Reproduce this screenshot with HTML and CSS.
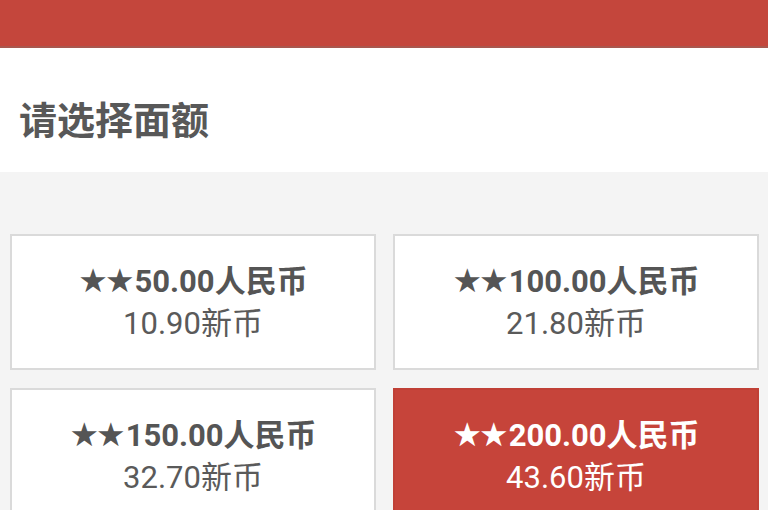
FILE: index.html
```html
<!DOCTYPE html>
<html lang="zh">
<head>
<meta charset="utf-8">
<link rel="stylesheet" href="styles.css">
</head>
<body>
<div class="topbar"></div>
<div class="title-row"><h1 class="title">请选择面额</h1></div>
<div class="options">
  <div class="card"><div class="main"><span class="stars">★★</span>50.00人民币</div><div class="sub">10.90新币</div></div>
  <div class="card"><div class="main"><span class="stars">★★</span>100.00人民币</div><div class="sub">21.80新币</div></div>
  <div class="card"><div class="main"><span class="stars">★★</span>150.00人民币</div><div class="sub">32.70新币</div></div>
  <div class="card selected"><div class="main"><span class="stars">★★</span>200.00人民币</div><div class="sub">43.60新币</div></div>
</div>
</body>
</html>
```
FILE: styles.css
```css
html, body {
  margin: 0;
  padding: 0;
  background: #f4f4f4;
  font-family: Roboto, "Noto Sans CJK SC", sans-serif;
  color: #555;
  overflow: hidden;
}
.topbar {
  height: 46px;
  background: #c4463c;
  border-bottom: 2px solid #a9574e;
}
.title-row {
  height: 124px;
  background: #fff;
  display: flex;
  align-items: center;
  padding-left: 19px;
}
.title {
  margin: 0;
  font-family: "Noto Sans CJK SC", sans-serif;
  font-size: 38px;
  font-weight: 700;
  color: #585858;
  line-height: 1;
  padding-top: 16px;
}
.options {
  display: grid;
  grid-template-columns: 1fr 1fr;
  gap: 18px 17px;
  padding: 62px 9px 0 10px;
}
.card {
  height: 136px;
  box-sizing: border-box;
  border: 2px solid #dadada;
  background: #fff;
  display: flex;
  flex-direction: column;
  justify-content: center;
  align-items: center;
}
.main {
  font-size: 31px;
  font-weight: 700;
  line-height: 42px;
  color: #555;
}
.stars {
  font-family: "DejaVu Sans", sans-serif;
  font-size: 33px;
  letter-spacing: -3px;
  margin-right: 3px;
}
.sub {
  font-size: 31px;
  line-height: 42px;
  color: #5a5a5a;
}
.card.selected {
  background: #c6443a;
  border-color: #c04036;
}
.card.selected .main,
.card.selected .sub {
  color: #fff;
}
```
